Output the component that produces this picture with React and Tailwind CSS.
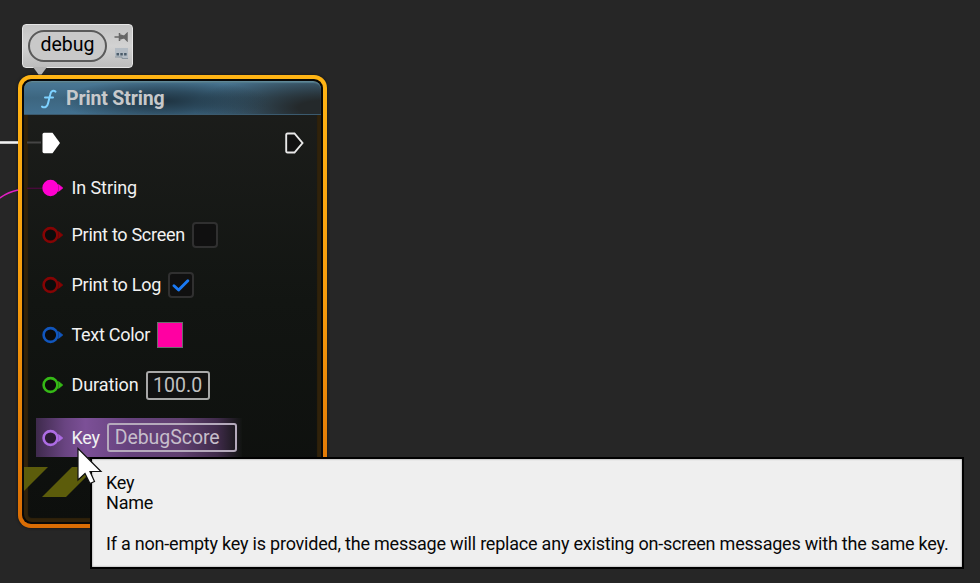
import React from "react";

function Pin({ stroke, fill = "#0b0b0b" }) {
  return (
    <svg className="h-[18px] w-[21px] shrink-0" viewBox="0 0 21 18">
      <circle cx="8.500" cy="9" r="6.900" fill={fill} stroke={stroke} strokeWidth="2.600" />
      <path d="M16.600 5.600L20.800 9L16.600 12.400Q17.600 9 16.600 5.600Z" fill={stroke} stroke={stroke} strokeWidth="0.800" />
    </svg>
  );
}

function Label({ children, tracking = "tracking-[-0.290px]" }) {
  return <span className={"ml-[8.500px] whitespace-nowrap text-[18px] leading-[26px] text-[#f2f2f2] " + tracking}>{children}</span>;
}

function CheckBox({ checked }) {
  return (
    <span className="ml-[7px] flex h-[26px] w-[26px] shrink-0 items-center justify-center rounded-[4px] border-2 border-[#303030] bg-[#101010]">
      {checked && (
        <svg className="h-[14px] w-[18px] shrink-0" viewBox="0 0 18 14">
          <path d="M2 7.800L6.600 12L15.800 2.800" fill="none" stroke="#1a7af5" strokeWidth="2.900" strokeLinecap="round" strokeLinejoin="round" />
        </svg>
      )}
    </span>
  );
}

function Comment() {
  return (
    <div className="absolute left-[22px] top-[24px] flex h-[44px] w-[111px] items-center rounded-[4px] border border-[#e5e5e5] bg-linear-to-b from-[#c4c4c4] via-[#d2d2d2] to-[#bdbdbd] pl-[5px]">
      <svg className="absolute left-[10px] top-[42px] h-[9px] w-[14px]" viewBox="0 0 14 9">
        <path d="M0 0H14L8.500 7.500H5.500Z" fill="#b4b4b4" />
      </svg>
      <div className="flex h-[32px] w-[79px] items-center justify-center rounded-full border-2 border-[#5a5a5a] bg-[#c9c9c9] pb-[3px] text-[19.500px] leading-none text-black">debug</div>
      <div className="ml-[7px] flex flex-col gap-[6px]">
        <svg className="h-[10px] w-[16px]" viewBox="0 0 16 10">
          <path d="M0.500 5H5M5.500 1V9M6 3L9 4H10.500L13 1.500V8.500L10.500 6H9L6 7Z" fill="#666" stroke="#666" strokeWidth="1.500" />
        </svg>
        <svg className="h-[12px] w-[16px]" viewBox="0 0 16 12">
          <path d="M1 0H14V10.500H11L1 8.500Z" fill="#b4bcc4" />
          <path d="M2.500 5H5V7.500H2.500ZM6.300 5H8.800V7.500H6.300ZM10.100 5H12.600V7.500H10.100Z" fill="#4b5c6a" />
          <path d="M1 9H8V10.500H14" fill="none" stroke="#8b969f" strokeWidth="1" />
        </svg>
      </div>
    </div>
  );
}

function Wires() {
  return (
    <svg className="absolute left-0 top-[130px] h-[80px] w-[50px]" viewBox="0 130 50 80">
      <path d="M0 142.500H18" stroke="#f2f2f2" strokeWidth="2.600" />
      <path d="M27 142.500H41" stroke="#454545" strokeWidth="2" />
      <path d="M-1 198.500Q8 192 18 190" fill="none" stroke="#e21fc4" strokeWidth="1.500" />
      <path d="M27 188.300H42" stroke="#4a0b3d" strokeWidth="1.300" />
    </svg>
  );
}

function PrintNode() {
  return (
    <div className="absolute left-[18px] top-[75px] h-[453px] w-[309px] rounded-[13px] bg-linear-to-b from-[#ffb414] via-[#f59a0c] to-[#d96c04] p-[4px] shadow-[0_0_3px_#111]">
      <div className="h-full rounded-[9px] bg-[#080808] p-[2px]">
        <div className="flex h-full flex-col overflow-hidden rounded-[8px] bg-linear-to-b from-[#1d1e1c] via-[#121512] to-[#0d0f0d] shadow-[inset_0_0_1px_4px_#30220a]">
          <div className="flex h-[34px] shrink-0 items-center rounded-t-[7px] border-y border-t-[#5f8797] border-b-[#3b5a6e] bg-[radial-gradient(ellipse_105px_22px_at_140px_19px,#1f3442_0%,#1f344299_45%,transparent_100%),radial-gradient(ellipse_130px_38px_at_300px_26px,#24292b_20%,transparent_100%),linear-gradient(180deg,#4a7896_0%,#3d6680_50%,#42708f_100%)] pl-[16px] pt-[1px] shadow-[inset_0_1px_1px_#537b8a]">
            <svg className="h-[22px] w-[17px]" viewBox="0 0 17 22">
              <path d="M15.500 3.600C13.500 2 11 2.800 10.300 6.200L8 15.500C7.300 19 4.500 20.300 2 18.600M5 9.500H13" fill="none" stroke="#7ed2ff" strokeWidth="2" strokeLinecap="round" />
            </svg>
            <span className="ml-[9px] whitespace-nowrap text-[19.500px] font-bold leading-none tracking-[-0.150px] text-[#c7c9cb]">Print String</span>
          </div>

          <div className="flex flex-col pl-[18px]">
            <div className="mt-[15px] flex h-[26px] items-center justify-between pr-[17px]">
              <svg className="h-[22px] w-[19px]" viewBox="0 0 19 22">
                <path d="M2 0.800H10.500L18 11L10.500 21.200H2Q0.500 21.200 0.500 19.500V2.500Q0.500 0.800 2 0.800Z" fill="#fff" />
              </svg>
              <svg className="h-[22px] w-[19px]" viewBox="0 0 19 22">
                <path d="M2.500 1.500H9.500L17.500 11L9.500 20.500H2.500Q1.200 20.500 1.200 19V3Q1.200 1.500 2.500 1.500Z" fill="#111" stroke="#e8e8e8" strokeWidth="1.900" />
              </svg>
            </div>
            <div className="mt-[19px] flex h-[26px] items-center"><Pin stroke="#ff00d0" fill="#ff00d0" /><Label tracking="tracking-[-0.100px]">In String</Label></div>
            <div className="mt-[21px] flex h-[26px] items-center"><Pin stroke="#850404" /><Label>Print to Screen</Label><CheckBox /></div>
            <div className="mt-[24px] flex h-[26px] items-center"><Pin stroke="#850404" /><Label tracking="tracking-[-0.250px]">Print to Log</Label><CheckBox checked /></div>
            <div className="mt-[24px] flex h-[26px] items-center">
              <Pin stroke="#1156bd" /><Label>Text Color</Label>
              <span className="ml-[7px] h-[26px] w-[26px] border border-[#65716b] bg-[#ff00a2]" />
            </div>
            <div className="mt-[24px] flex h-[26px] items-center">
              <Pin stroke="#35b916" /><Label tracking="tracking-[-0.080px]">Duration</Label>
              <span className="ml-[7px] flex h-[29px] w-[64px] items-center justify-center rounded-[3px] border-2 border-[#a8a8a8] bg-[#111] pt-[1px] text-[19.500px] leading-none text-[#c0c0c0]">100.0</span>
            </div>
          </div>

          <div className="ml-[12px] mt-[20px] flex h-[39px] w-[206px] shrink-0 items-center bg-[linear-gradient(90deg,#3e2a4c_0%,#694481_14%,#7c5097_24%,#66427d_45%,#604070_70%,#402b4b_88%,#111411_100%)] pl-[6px]">
            <Pin stroke="#ad6ce4" fill="#2b1b35" /><Label>Key</Label>
            <span className="ml-[7px] flex h-[29px] w-[130px] shrink-0 items-center rounded-[3px] border-2 border-[#b5aabc] pl-[6px] text-[19.500px] leading-none tracking-[-0.050px] text-[#c6becb]">DebugScore</span>
          </div>

          <svg className="mt-[10px] h-[30px] w-[120px] shrink-0" viewBox="24 467 120 30">
            <path d="M24 467H48L24 491ZM72 467H96L66 497H42Z" fill="#5c5c0b" />
          </svg>
        </div>
      </div>
    </div>
  );
}

function Tooltip() {
  return (
    <div className="absolute left-[90px] top-[457px] h-[112px] w-[874px] border-2 border-black bg-[#efefef] pl-[14px] pt-[13.500px] text-[18px] leading-[20.500px] tracking-[-0.215px] text-[#080808] shadow-[inset_0_0_2px_#777]">
      <p>Key</p>
      <p>Name</p>
      <p className="mt-[20.500px] whitespace-nowrap">If a non-empty key is provided, the message will replace any existing on-screen messages with the same key.</p>
    </div>
  );
}

export default function App() {
  return (
    <main className="relative h-[583px] w-[980px] overflow-hidden bg-[#262626] font-['Roboto',sans-serif]">
      <PrintNode />
      <Wires />
      <Comment />
      <Tooltip />
      <svg className="absolute left-[76px] top-[446px] h-[40px] w-[28px]" viewBox="76 446 28 40">
        <path d="M78 448.500V480L85 473.500L90 483.500L94.500 481.500L90 471.500H101Z" fill="#fff" stroke="#111" strokeWidth="1.200" />
      </svg>
    </main>
  );
}
